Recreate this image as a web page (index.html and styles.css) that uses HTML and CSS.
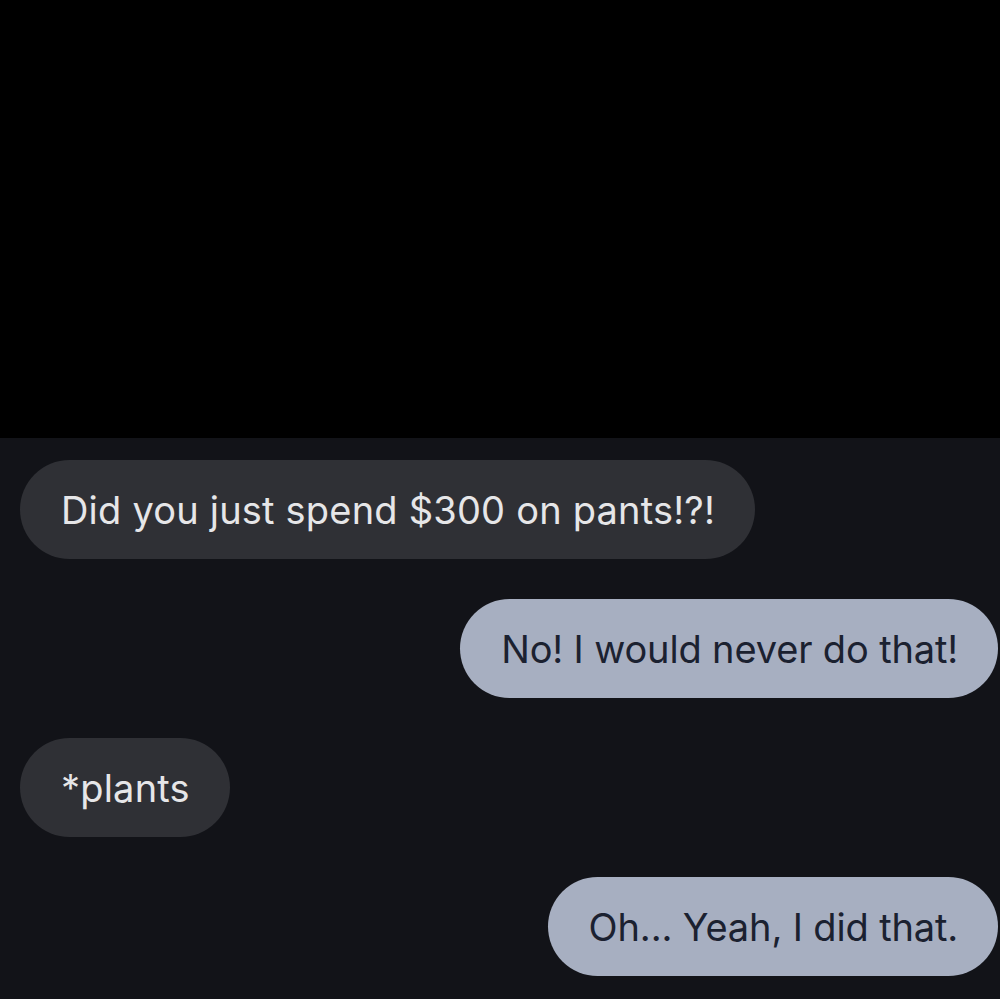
FILE: index.html
```html
<!DOCTYPE html>
<html>
<head>
<meta charset="utf-8">
<link rel="stylesheet" href="styles.css">
</head>
<body>
<div class="top"></div>
<div class="chat">
  <div class="msg in">Did you just spend $300 on pants!?!</div>
  <div class="msg out">No! I would never do that!</div>
  <div class="msg in">*plants</div>
  <div class="msg out">Oh... Yeah, I did that.</div>
</div>
</body>
</html>
```
FILE: styles.css
```css
html, body {
  margin: 0;
  padding: 0;
  background: #121318;
  width: 1000px;
  height: 999px;
  overflow: hidden;
}
.top {
  height: 438px;
  background: #000;
}
.chat {
  display: flex;
  flex-direction: column;
  gap: 40px;
  padding: 22px 2px 0 20px;
}
.msg {
  height: 99px;
  border-radius: 50px;
  display: flex;
  align-items: center;
  padding: 0 40px 0 41px;
  font-family: Inter, "Liberation Sans", sans-serif;
  font-size: 38px;
  letter-spacing: 0.2px;
  box-sizing: border-box;
  white-space: nowrap;
}
.in {
  align-self: flex-start;
  background: #2f3035;
  color: #e6e6e8;
}
.out {
  align-self: flex-end;
  background: #a7afc1;
  color: #1b2130;
  letter-spacing: -0.15px;
}
```
